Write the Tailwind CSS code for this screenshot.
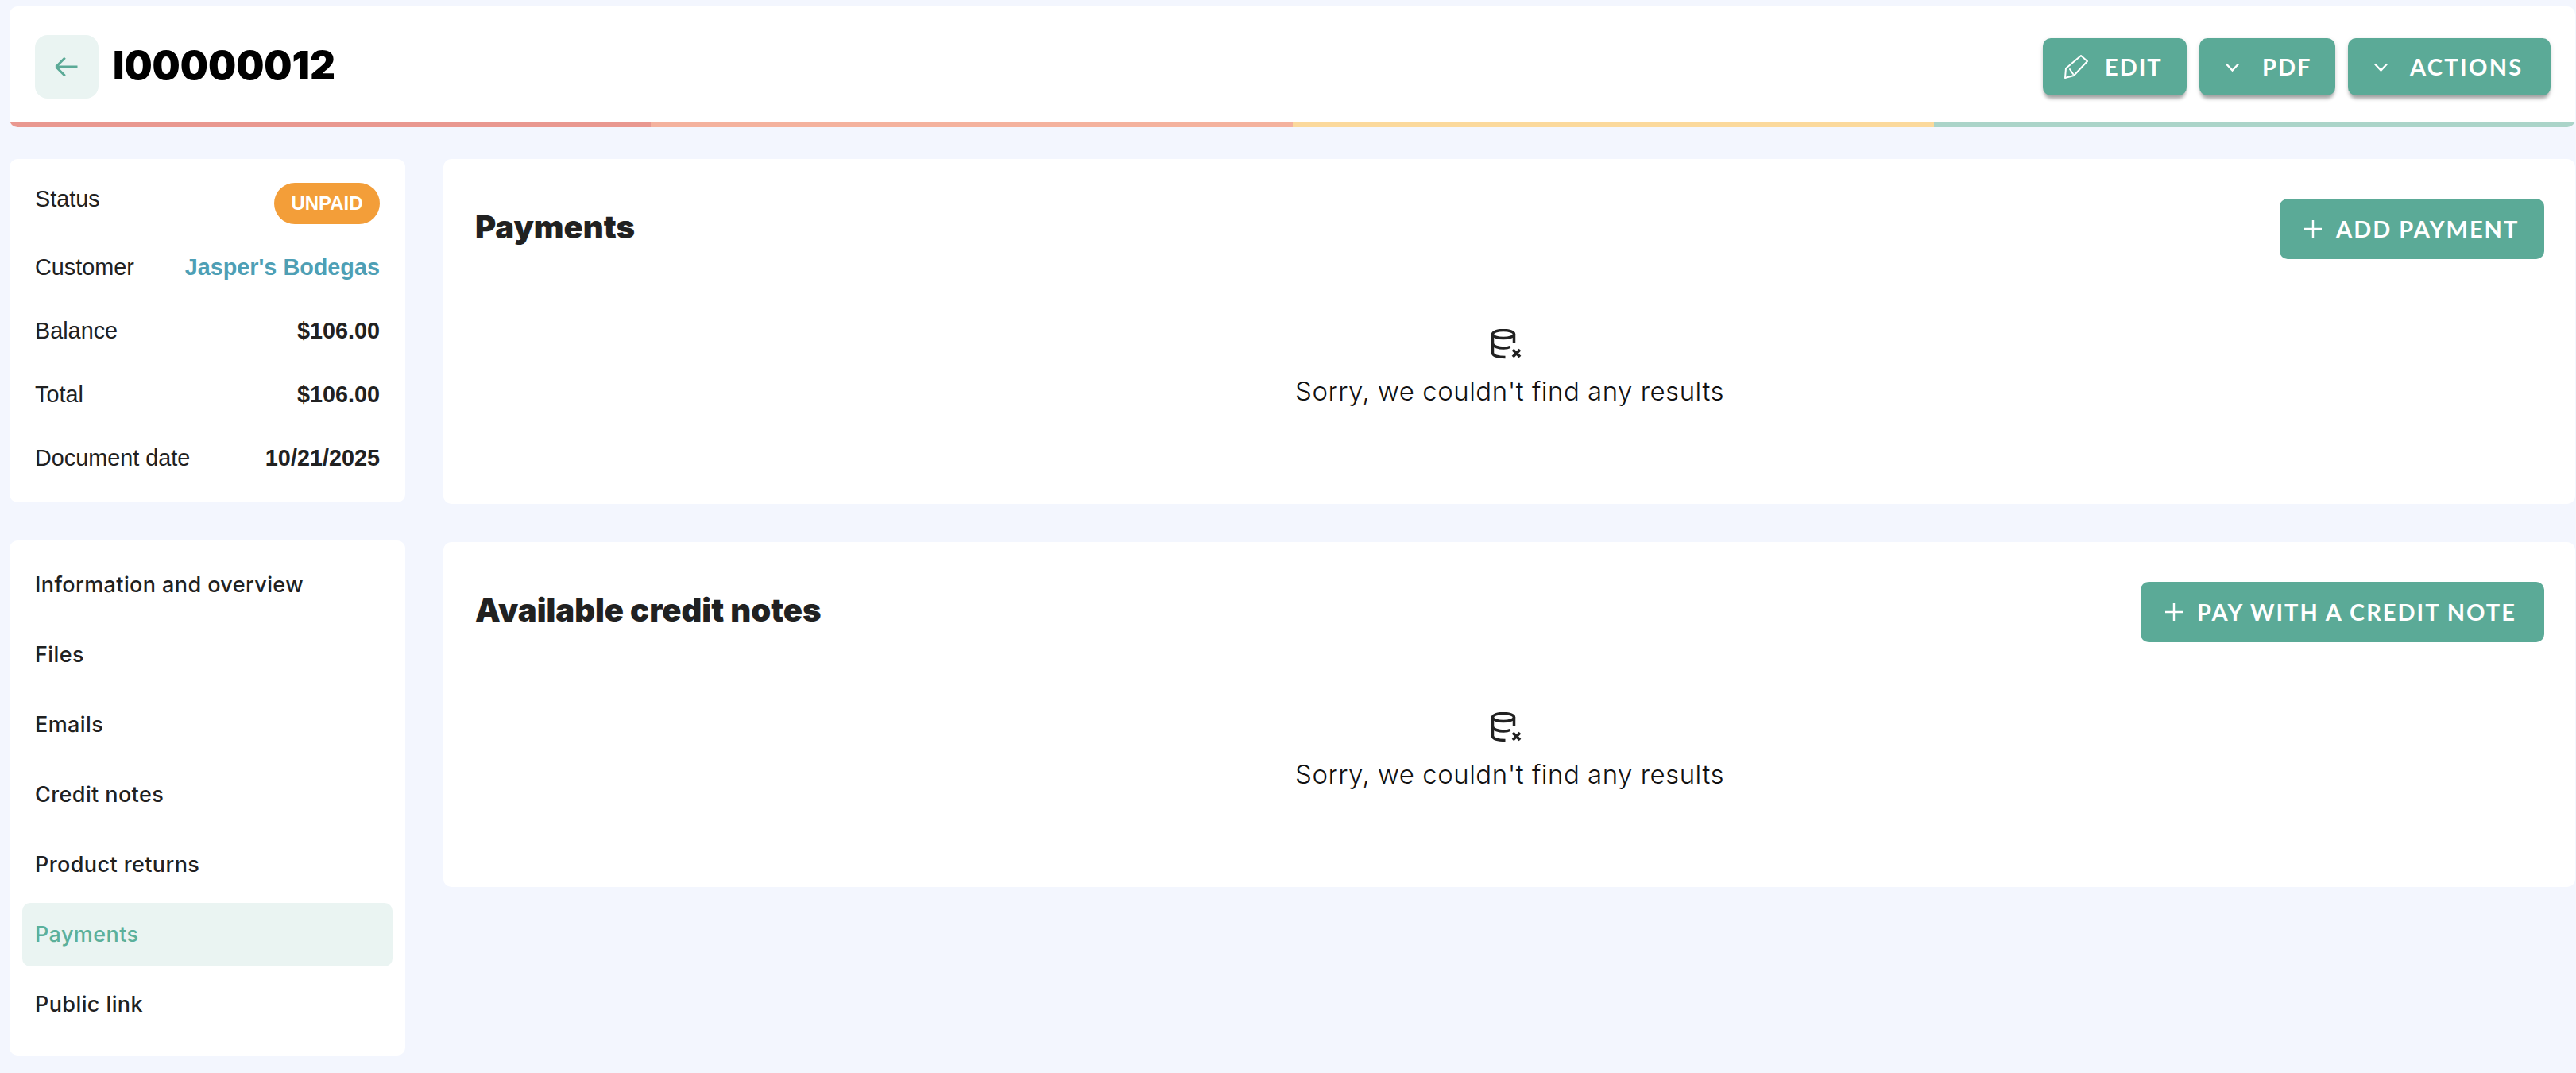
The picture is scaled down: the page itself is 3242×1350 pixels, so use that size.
<!DOCTYPE html>
<html lang="en">
<head>
  <meta charset="UTF-8" />
  <title>I00000012</title>
  <script src="https://cdn.jsdelivr.net/npm/@tailwindcss/browser@4"></script>
</head>
<body class="bg-[#f3f6fe] text-[#212121] font-['Inter',sans-serif] w-[3242px] h-[1350px] overflow-hidden">
  <div class="pt-2 pl-3 pr-px">

    <!-- Header -->
    <header class="bg-white rounded-[10px] overflow-hidden">
      <div class="h-[146px] pt-9 pl-8 pr-[31px] flex justify-between items-start">
        <div class="flex items-center gap-[18px]">
          <a class="w-20 h-20 rounded-2xl bg-[#eaf4f2] flex items-center justify-center text-[#5baa97]">
            <svg class="w-9 h-9" viewBox="0 0 24 24" fill="none" stroke="currentColor" stroke-width="2"><path d="M10.5 19.5 3 12m0 0 7.5-7.5M3 12h18"/></svg>
          </a>
          <h1 class="text-[49.500px] leading-[60px] font-black text-black -mt-1">I00000012</h1>
        </div>
        <div class="mt-1 flex gap-4 font-['Lato',sans-serif] font-bold text-white text-[29px] tracking-[2px]">
          <button class="w-[181px] h-[72px] pl-[27px] rounded-[10px] bg-[#5baa97] flex items-center gap-[21px] shadow-[0_6px_4px_-2px_rgba(0,0,0,0.3),0_2px_6px_0_rgba(0,0,0,0.12)]">
            <svg class="w-[30px] h-[30px]" viewBox="0 0 30 30" fill="none" stroke="currentColor" stroke-width="2" stroke-linejoin="round" stroke-linecap="round"><path d="M2 17 21 1l8 7-17 18-11 3zM7 18l4 6"/></svg>
            EDIT
          </button>
          <button class="w-[171px] h-[72px] pl-[33px] rounded-[10px] bg-[#5baa97] flex items-center gap-[29px] shadow-[0_6px_4px_-2px_rgba(0,0,0,0.3),0_2px_6px_0_rgba(0,0,0,0.12)]">
            <svg class="w-[17px] h-[11px]" viewBox="0 0 17 11" fill="none" stroke="currentColor" stroke-width="2.4"><path d="m1 1.5 7.500 8 7.500-8"/></svg>
            PDF
          </button>
          <button class="w-[255px] h-[72px] pl-[33px] rounded-[10px] bg-[#5baa97] flex items-center gap-[28px] shadow-[0_6px_4px_-2px_rgba(0,0,0,0.3),0_2px_6px_0_rgba(0,0,0,0.12)]">
            <svg class="w-[17px] h-[11px]" viewBox="0 0 17 11" fill="none" stroke="currentColor" stroke-width="2.4"><path d="m1 1.5 7.500 8 7.500-8"/></svg>
            <span class="tracking-[2.300px]">ACTIONS</span>
          </button>
        </div>
      </div>
      <div class="grid grid-cols-4 h-1.5">
        <div class="bg-[#e99890]"></div>
        <div class="bg-[#f4b29e]"></div>
        <div class="bg-[#fbd99c]"></div>
        <div class="bg-[#abd4c9]"></div>
      </div>
    </header>

    <div class="mt-10 flex gap-12 items-start">

      <!-- Sidebar -->
      <aside class="w-[498px] shrink-0 flex flex-col gap-12">
        <div class="h-[432px] bg-white rounded-[10px] pt-[29px] px-8 font-['Liberation_Sans',sans-serif] text-[28.8px] leading-[43px]">
          <div class="h-[86px] flex justify-between items-start">
            <span>Status</span>
            <span class="mt-[1px] h-[52px] w-[133px] rounded-full bg-[#f39e39] text-white text-2xl font-bold flex items-center justify-center">UNPAID</span>
          </div>
          <div class="h-[80px] flex justify-between">
            <span>Customer</span>
            <a class="font-bold text-[#4e9fb5]">Jasper's Bodegas</a>
          </div>
          <div class="h-[80px] flex justify-between">
            <span>Balance</span>
            <span class="font-bold">$106.00</span>
          </div>
          <div class="h-[80px] flex justify-between">
            <span>Total</span>
            <span class="font-bold">$106.00</span>
          </div>
          <div class="flex justify-between">
            <span>Document date</span>
            <span class="font-bold">10/21/2025</span>
          </div>
        </div>

        <nav class="bg-white rounded-[10px] pt-4 pb-6 px-4 flex flex-col gap-2 text-[27px] tracking-[0.4px] font-medium">
          <a class="h-20 px-4 pt-px rounded-[10px] flex items-center">Information and overview</a>
          <a class="h-20 px-4 pt-px rounded-[10px] flex items-center">Files</a>
          <a class="h-20 px-4 pt-px rounded-[10px] flex items-center">Emails</a>
          <a class="h-20 px-4 pt-px rounded-[10px] flex items-center">Credit notes</a>
          <a class="h-20 px-4 pt-px rounded-[10px] flex items-center">Product returns</a>
          <a class="h-20 px-4 pt-px rounded-[10px] flex items-center bg-[#eaf4f2] text-[#5bb09b]">Payments</a>
          <a class="h-20 px-4 pt-px rounded-[10px] flex items-center">Public link</a>
        </nav>
      </aside>

      <!-- Main -->
      <main class="flex-1 flex flex-col gap-12">
        <section class="h-[434px] bg-white rounded-[10px] pt-[50px] px-10 pr-[39px]">
          <div class="flex justify-between items-center">
            <h2 class="text-[40px] font-black mb-1">Payments</h2>
            <button class="w-[333px] h-[76px] pl-[31px] rounded-[10px] bg-[#5baa97] text-white font-['Lato',sans-serif] font-bold text-[29px] tracking-[2px] flex items-center gap-[18px]">
              <svg class="w-[22px] h-[22px]" viewBox="0 0 22 22" fill="none" stroke="currentColor" stroke-width="2.4"><path d="M11 0v22M0 11h22"/></svg>
              ADD PAYMENT
            </button>
          </div>
          <div class="mt-[88px] flex flex-col items-center text-[33px] text-[#111] tracking-[0.5px] font-light leading-[48px]">
            <svg class="w-[38px] h-[38px] -ml-2" viewBox="0 0 38 38" fill="none" stroke="#212121" stroke-width="3.500"><ellipse cx="15" cy="6.500" rx="13.500" ry="5"/><path d="M1.500 6.500V30c0 3.500 7 5.500 16 5.500M28.500 6.500V18M1.500 18c0 4 8 6 14 6 3 0 6-.5 8-1.500"/><path d="m27 26 9 9m0-9-9 9" stroke-width="3.800"/></svg>
            <p class="mt-4">Sorry, we couldn't find any results</p>
          </div>
        </section>

        <section class="h-[434px] bg-white rounded-[10px] pt-[50px] px-10 pr-[39px]">
          <div class="flex justify-between items-center">
            <h2 class="text-[40px] font-black mb-1">Available credit notes</h2>
            <button class="w-[508px] h-[76px] pl-[31px] rounded-[10px] bg-[#5baa97] text-white font-['Lato',sans-serif] font-bold text-[29px] tracking-[2px] flex items-center gap-[18px]">
              <svg class="w-[22px] h-[22px]" viewBox="0 0 22 22" fill="none" stroke="currentColor" stroke-width="2.4"><path d="M11 0v22M0 11h22"/></svg>
              PAY WITH A CREDIT NOTE
            </button>
          </div>
          <div class="mt-[88px] flex flex-col items-center text-[33px] text-[#111] tracking-[0.5px] font-light leading-[48px]">
            <svg class="w-[38px] h-[38px] -ml-2" viewBox="0 0 38 38" fill="none" stroke="#212121" stroke-width="3.500"><ellipse cx="15" cy="6.500" rx="13.500" ry="5"/><path d="M1.500 6.500V30c0 3.500 7 5.500 16 5.500M28.500 6.500V18M1.500 18c0 4 8 6 14 6 3 0 6-.5 8-1.500"/><path d="m27 26 9 9m0-9-9 9" stroke-width="3.800"/></svg>
            <p class="mt-4">Sorry, we couldn't find any results</p>
          </div>
        </section>
      </main>
    </div>
  </div>
</body>
</html>
